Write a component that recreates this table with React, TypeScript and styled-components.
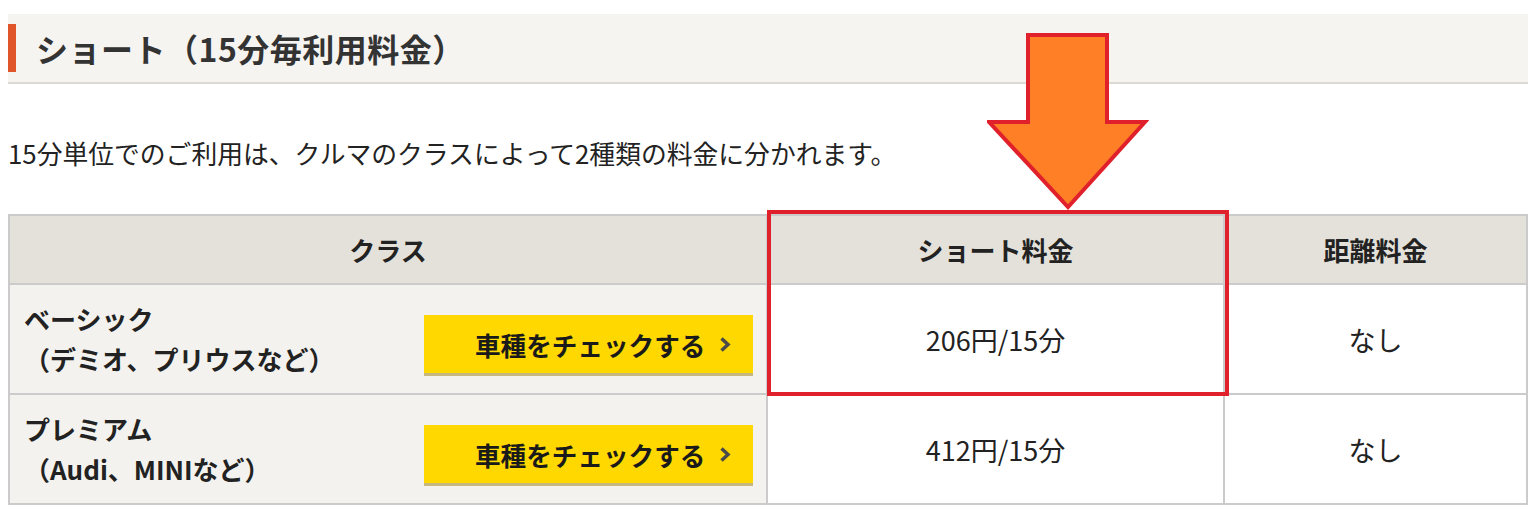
import React from "react";
import styled, { createGlobalStyle } from "styled-components";

const GlobalStyle = createGlobalStyle`
  html, body {
    margin: 0;
    padding: 0;
    background: #fff;
  }
  body {
    font-family: "Noto Sans CJK JP", "Noto Sans", sans-serif;
    color: #222;
  }
`;

const Page = styled.div`
  position: relative;
  width: 1520px;
  margin-left: 8px;
  padding-top: 14px;
`;

const Heading = styled.h2`
  display: flex;
  align-items: center;
  height: 68px;
  margin: 0;
  background: #f5f4f1;
  border-bottom: 2px solid #dcdbd3;
  font-size: 32px;
  font-weight: 700;
  color: #333;
  letter-spacing: 0.5px;

  &::before {
    content: "";
    width: 8px;
    height: 48px;
    margin-right: 20px;
    background: #e0562a;
  }
`;

const Lead = styled.p`
  margin: 51px 0 43px;
  font-size: 25.8px;
  line-height: 36px;
  color: #222;
`;

const TableWrap = styled.div`
  position: relative;
`;

const Grid = styled.div`
  display: grid;
  grid-template-columns: 756px 455px 301px;
  grid-template-rows: 67px 108px 108px;
  gap: 2px;
  padding: 2px;
  background: #cbcbcb;
`;

const HeadCell = styled.div`
  display: flex;
  align-items: center;
  justify-content: center;
  background: #e3e1d9;
  font-size: 26px;
  font-weight: 700;
  color: #222;
`;

const ClassCell = styled.div`
  display: flex;
  align-items: center;
  justify-content: space-between;
  padding: 0 13px 0 14px;
  background: #f3f2ee;
`;

const ClassName = styled.div`
  font-size: 26px;
  font-weight: 700;
  line-height: 40px;
  color: #222;
`;

const CheckButton = styled.a`
  display: flex;
  align-items: center;
  gap: 14px;
  box-sizing: border-box;
  width: 329px;
  height: 58px;
  margin-top: 10px;
  padding-left: 51px;
  background: #ffd800;
  box-shadow: 0 3px 0 #c6b87f;
  font-size: 25.6px;
  font-weight: 700;
  color: #1a1a1a;
  text-decoration: none;
  cursor: pointer;
`;

const ValueCell = styled.div`
  display: flex;
  align-items: center;
  justify-content: center;
  background: #fff;
  font-size: 27px;
  color: #222;
`;

const Highlight = styled.div`
  position: absolute;
  left: 759px;
  top: -4px;
  width: 462px;
  height: 186px;
  box-sizing: border-box;
  border: 4px solid #e0202a;
  pointer-events: none;
`;

const Arrow = styled.svg`
  position: absolute;
  left: 979px;
  top: 33px;
  pointer-events: none;
`;

const Chevron = () => (
  <svg width="12" height="17" viewBox="0 0 12 17">
    <polyline
      points="2.5,2.5 9,8.5 2.5,14.5"
      fill="none"
      stroke="#4a4a4a"
      strokeWidth="3.5"
    />
  </svg>
);

const rows = [
  { name: "ベーシック", note: "（デミオ、プリウスなど）", price: "206円/15分", distance: "なし" },
  { name: "プレミアム", note: "（Audi、MINIなど）", price: "412円/15分", distance: "なし" },
];

export default function App() {
  return (
    <>
      <GlobalStyle />
      <Page>
        <Heading>ショート（15分毎利用料金）</Heading>
        <Lead>15分単位でのご利用は、クルマのクラスによって2種類の料金に分かれます。</Lead>
        <TableWrap>
          <Grid>
            <HeadCell>クラス</HeadCell>
            <HeadCell>ショート料金</HeadCell>
            <HeadCell>距離料金</HeadCell>
            {rows.map((r) => (
              <React.Fragment key={r.name}>
                <ClassCell>
                  <ClassName>
                    {r.name}
                    <br />
                    {r.note}
                  </ClassName>
                  <CheckButton>
                    車種をチェックする
                    <Chevron />
                  </CheckButton>
                </ClassCell>
                <ValueCell>{r.price}</ValueCell>
                <ValueCell>{r.distance}</ValueCell>
              </React.Fragment>
            ))}
          </Grid>
          <Highlight />
        </TableWrap>
        <Arrow width="162" height="180" viewBox="0 0 162 180">
          <polygon
            points="41,2 120,2 120,89 158,89 81,174 2,89 41,89"
            fill="#ff7f27"
            stroke="#e0202a"
            strokeWidth="4"
            strokeLinejoin="miter"
          />
        </Arrow>
      </Page>
    </>
  );
}
